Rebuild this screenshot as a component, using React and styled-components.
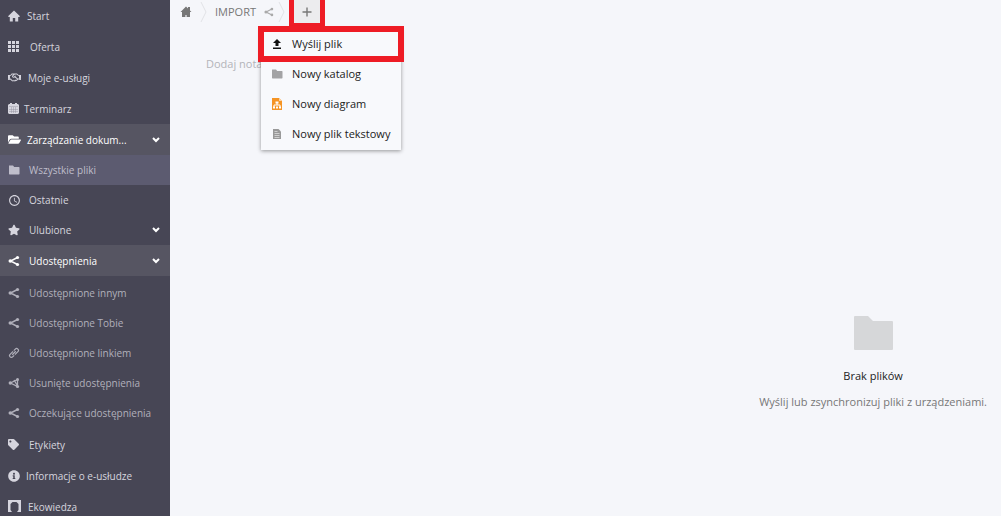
import styled, { createGlobalStyle, css } from 'styled-components';
import { FaRegHandshake, FaFolderOpen, FaStar, FaTag, FaInfoCircle } from 'react-icons/fa';
import { MdAccessTime } from 'react-icons/md';

const documentItems = [
  { label: 'Wszystkie pliki', icon: FolderIcon, isSelected: true },
  { label: 'Ostatnie', icon: MdAccessTime, size: 13, gap: 8 },
  { label: 'Ulubione', icon: FaStar, hasArrow: true },
];

const shareItems = [
  { label: 'Udostępnione innym', icon: ShareIcon },
  { label: 'Udostępnione Tobie', icon: ShareIcon },
  { label: 'Udostępnione linkiem', icon: LinkIcon },
  { label: 'Usunięte udostępnienia', icon: UnshareIcon },
  { label: 'Oczekujące udostępnienia', icon: ShareIcon },
];

const menuItems = [
  { label: 'Wyślij plik', icon: UploadIcon, color: '#111' },
  { label: 'Nowy katalog', icon: FolderIcon, color: '#a3a3a5' },
  { label: 'Nowy diagram', icon: DiagramIcon, color: '#f59425' },
  { label: 'Nowy plik tekstowy', icon: TextFileIcon, color: '#999' },
];

export default function App() {
  return (
    <StyledLayout>
      <GlobalStyle />
      <Sidebar />
      <StyledMain>
        <StyledBreadcrumb aria-label="Ścieżka">
          <StyledCrumb href="#" aria-label="Start">
            <ChimneyHomeIcon />
          </StyledCrumb>
          <Separator />
          <StyledCrumb href="#">IMPORT</StyledCrumb>
          <StyledShareButton aria-label="Udostępnij">
            <ShareIcon size={10} />
          </StyledShareButton>
          <Separator />
          <StyledNew>
            <StyledNewFrame>
              <StyledNewButton aria-label="Nowy">
                <PlusIcon />
              </StyledNewButton>
            </StyledNewFrame>
            <NewMenu />
          </StyledNew>
        </StyledBreadcrumb>
        <StyledNote>Dodaj notatki</StyledNote>
        <StyledEmpty>
          <LargeFolder />
          <StyledEmptyTitle>Brak plików</StyledEmptyTitle>
          <StyledEmptyText>Wyślij lub zsynchronizuj pliki z urządzeniami.</StyledEmptyText>
        </StyledEmpty>
      </StyledMain>
    </StyledLayout>
  );
}

function Sidebar() {
  return (
    <StyledSidebar>
      <NavItem label="Start" icon={HomeIcon} gap={7} />
      <NavItem label="Oferta" icon={GridIcon} gap={10} />
      <NavItem label="Moje e-usługi" icon={FaRegHandshake} size={13} gap={7} />
      <NavItem label="Terminarz" icon={CalendarIcon} size={11} gap={5} />
      <NavItem label="Zarządzanie dokum..." icon={FaFolderOpen} size={13} gap={6} hasArrow isOpen />
      <StyledGroup>
        {documentItems.map(item => (
          <NavItem key={item.label} {...item} isNested />
        ))}
      </StyledGroup>
      <NavItem label="Udostępnienia" icon={ShareIcon} hasArrow isOpen />
      <StyledGroup $isPadded>
        {shareItems.map(item => (
          <NavItem key={item.label} {...item} isNested isMuted />
        ))}
      </StyledGroup>
      <NavItem label="Etykiety" icon={FaTag} size={11} gap={10} />
      <NavItem label="Informacje o e-usłudze" icon={FaInfoCircle} gap={6} />
      <NavItem label="Ekowiedza" icon={FrameIcon} size={13} gap={7} />
    </StyledSidebar>
  );
}

function NavItem({ label, icon: Icon, size = 12, gap = 9, hasArrow, ...state }) {
  return (
    <StyledNavItem href="#" $gap={gap} $state={state}>
      <Icon size={size} />
      <span>{label}</span>
      {hasArrow && <ArrowIcon />}
    </StyledNavItem>
  );
}

function NewMenu() {
  return (
    <StyledMenu>
      {menuItems.map(({ label, icon: Icon, color }, index) => (
        <StyledMenuItem key={label} $color={color} $isMarked={index === 0}>
          <Icon size={12} />
          {label}
        </StyledMenuItem>
      ))}
    </StyledMenu>
  );
}

function Separator() {
  return (
    <StyledSeparator width="7" height="22" viewBox="0 0 7 22" fill="none" stroke="#e2e3e7">
      <path d="M1 1l5 10-5 10" />
    </StyledSeparator>
  );
}

function ArrowIcon() {
  return (
    <svg width="8" height="6" viewBox="0 0 8 6" fill="none" stroke="#fff" strokeWidth="2">
      <path d="M1 1l3 3 3-3" />
    </svg>
  );
}

function PlusIcon() {
  return (
    <svg width="10" height="10" viewBox="0 0 10 10" stroke="#777" strokeWidth="1.4">
      <path d="M5 0.5v9M0.5 5h9" />
    </svg>
  );
}

function HomeIcon({ size }) {
  return (
    <svg width={size} height={size} viewBox="0 0 12 12" fill="currentColor">
      <path d="M6 0.5L0 6.3l0.8 0.6h1v4.6h3V8h2.4v3.5h3V6.9h1l0.8-0.6z" />
    </svg>
  );
}

function ChimneyHomeIcon() {
  return (
    <svg width="12" height="12" viewBox="0 0 12 12" fill="currentColor">
      <path d="M6 0.5L0.5 6H2v5h3.4V9h1.2v2H10V6h1.5L10 4.5V1H8v1.5z" />
    </svg>
  );
}

function GridIcon({ size }) {
  return (
    <svg width={size} height={size} viewBox="0 0 12 12" fill="currentColor">
      <path d="M0 0h3v3H0zM4 0h3v3H4zM8 0h3v3H8zM0 4h3v3H0zM4 4h3v3H4zM8 4h3v3H8zM0 8h3v3H0zM4 8h3v3H4zM8 8h3v3H8z" />
    </svg>
  );
}

function CalendarIcon({ size }) {
  return (
    <svg width={size} height={size} viewBox="0 0 11 11">
      <path d="M1 1h1V0h2v1h3V0h2v1h1l1 1v8l-1 1H1l-1-1V2z" fill="currentColor" />
      <path d="M1 3.5h9M3.5 4v6M5.5 4v6M7.5 4v6M1 6.5h9M1 8.5h9" stroke="#8c8b98" strokeWidth="0.4" />
    </svg>
  );
}

function FolderIcon({ size }) {
  return (
    <svg width={size} height={size} viewBox="0 0 12 12" fill="currentColor">
      <path d="M1 1.5h4L6.2 3H11l0.5 0.5V10l-0.5 0.5H1.5L1 10z" />
    </svg>
  );
}

function ShareIcon({ size }) {
  return (
    <svg width={size} height={size} viewBox="0 0 12 12" fill="currentColor" stroke="currentColor">
      <path d="M9.5 2.5L2.5 6l7 3.5" fill="none" strokeWidth="1.4" />
      <circle cx="9.5" cy="2.5" r="1.6" stroke="none" />
      <circle cx="2.3" cy="6" r="1.8" stroke="none" />
      <circle cx="9.5" cy="9.5" r="1.6" stroke="none" />
    </svg>
  );
}

function UnshareIcon({ size }) {
  return (
    <svg width={size} height={size} viewBox="0 0 12 12" fill="currentColor" stroke="currentColor">
      <path d="M9.5 2.5L2.5 6l7 3.5zM6 3l3 5" fill="none" strokeWidth="1.3" />
      <circle cx="9.5" cy="2.5" r="1.5" stroke="none" />
      <circle cx="2.3" cy="6" r="1.7" stroke="none" />
      <circle cx="9.5" cy="9.5" r="1.6" stroke="none" />
    </svg>
  );
}

function LinkIcon({ size }) {
  return (
    <svg width={size} height={size} viewBox="0 0 12 12" fill="none" stroke="currentColor">
      <g transform="rotate(-45 6 6)" strokeWidth="1.2">
        <path d="M6.5 4.2H2.3a1.8 1.8 0 0 0 0 3.6h2.2M5.5 7.8h4.2a1.8 1.8 0 0 0 0-3.6H7.5M3.5 6h5" />
      </g>
    </svg>
  );
}

function FrameIcon({ size }) {
  return (
    <svg width={size} height={size} viewBox="0 0 13 13" fill="currentColor">
      <path fillRule="evenodd" d="M0 0h13v12H9l1.5-2V4l-2-2h-4l-2 2v6L4 12H0z" />
    </svg>
  );
}

function UploadIcon({ size }) {
  return (
    <svg width={size} height={size} viewBox="0 0 12 12" fill="currentColor">
      <path d="M6 1L2 5h2.500v3h3V5H10zM2 9.500h8V11H2z" />
    </svg>
  );
}

function DiagramIcon() {
  return (
    <svg width="12" height="14" viewBox="0 0 12 14">
      <path d="M1 1h7l3 3v9H1z" fill="currentColor" />
      <path d="M8 1l3 3H8z" fill="#fbd3a3" />
      <path d="M6 6v2M3 10V8h6v2" stroke="#fff" fill="none" />
      <path d="M4.5 4.5h3v2h-3zM2 9.5h2v2H2zM5 9.5h2v2H5zM8 9.5h2v2H8z" fill="#fff" />
    </svg>
  );
}

function TextFileIcon({ size }) {
  return (
    <svg width={size} height={size} viewBox="0 0 12 12">
      <path d="M2 1h5.5L10 3.5V11H2z" fill="currentColor" />
      <path d="M3.5 3.5h3M3.5 5.5h5M3.5 7.5h5M3.5 9.5h5" stroke="#ddd" strokeWidth="0.8" />
    </svg>
  );
}

function LargeFolder() {
  return (
    <svg width="39" height="34" viewBox="0 0 39 34" fill="#d6d7d9">
      <path d="M1 0h13l5 5h19a1 1 0 0 1 1 1v27a1 1 0 0 1-1 1H1a1 1 0 0 1-1-1V1a1 1 0 0 1 1-1z" />
    </svg>
  );
}

const GlobalStyle = createGlobalStyle`
  * {
    box-sizing: border-box;
  }

  body {
    margin: 0;
    overflow: hidden;
    background-color: #f5f6fa;
    font-family: 'Open Sans', sans-serif;
    font-size: 11px;
    line-height: 16px;
  }

  a {
    text-decoration: none;
  }

  button {
    margin: 0;
    padding: 0;
    border: none;
    background: none;
    font: inherit;
  }
`;

const StyledLayout = styled.div`
  display: grid;
  grid-template-columns: 170px 1fr;
  height: 100vh;
`;

const StyledSidebar = styled.nav`
  overflow: hidden;
  background-color: #474655;
  font-size: 10px;
`;

const StyledGroup = styled.div`
  padding: ${({ $isPadded }) => ($isPadded ? '2px 0 1px' : '0')};
`;

const StyledNavItem = styled.a`
  display: flex;
  align-items: center;
  gap: ${({ $gap }) => $gap}px;
  height: ${({ $state }) => ($state.isNested ? '30px' : '31px')};
  padding: 0 10px 0 8px;
  color: ${({ $state }) => ($state.isMuted ? '#b1b0bb' : '#d6d5de')};
  white-space: nowrap;

  svg {
    flex-shrink: 0;
  }

  span {
    flex: 1;
  }

  ${({ $state }) =>
    $state.isOpen &&
    css`
      background-color: #565562;
      color: #fff;
    `}

  ${({ $state }) =>
    $state.isSelected &&
    css`
      background-color: #5c5b70;
      color: #bfbecb;
    `}
`;

const StyledMain = styled.main`
  display: flex;
  flex-direction: column;
`;

const StyledBreadcrumb = styled.nav`
  display: flex;
  align-items: center;
  height: 23px;
  padding-left: 6px;
`;

const StyledCrumb = styled.a`
  display: flex;
  padding: 0 4px;
  color: #777;
`;

const StyledSeparator = styled.svg`
  margin: 0 4px;
`;

const StyledShareButton = styled.button`
  display: flex;
  margin-left: 4px;
  color: #aaa;
`;

const StyledNew = styled.div`
  position: relative;
  align-self: flex-start;
`;

const StyledNewFrame = styled.div`
  padding: 0 5px 4px;
  background-color: #ee1c25;
`;

const StyledNewButton = styled.button`
  display: flex;
  align-items: center;
  justify-content: center;
  width: 26px;
  height: 23px;
  background-color: #ececee;
`;

const StyledMenu = styled.div`
  position: absolute;
  top: 29px;
  left: -28px;
  width: 140px;
  padding-bottom: 1px;
  background-color: #f8f9fc;
  box-shadow: 0 1px 4px rgba(0, 0, 0, 0.4);
`;

const StyledMenuItem = styled.button`
  display: flex;
  align-items: center;
  gap: 9px;
  width: 100%;
  height: 30px;
  padding: 0 10px;
  color: #222;
  white-space: nowrap;

  svg {
    flex-shrink: 0;
    color: ${({ $color }) => $color};
  }

  ${({ $isMarked }) =>
    $isMarked &&
    css`
      outline: 6px solid #ee1c25;
      outline-offset: -3px;
    `}
`;

const StyledNote = styled.p`
  margin: 33px 0 0 36px;
  color: #b3b4b9;
`;

const StyledEmpty = styled.section`
  display: flex;
  flex-direction: column;
  align-items: center;
  align-self: flex-end;
  margin: auto 14px 106px 0;
`;

const StyledEmptyTitle = styled.h2`
  margin: 18px 0 10px;
  color: #222;
  font-size: 11px;
  font-weight: 400;
`;

const StyledEmptyText = styled.p`
  margin: 0;
  color: #777;
`;
